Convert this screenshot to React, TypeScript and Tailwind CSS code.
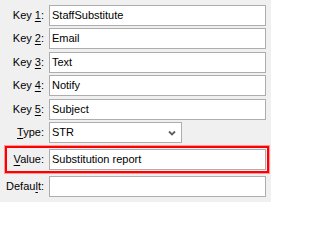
import React from "react";

const font = { fontFamily: '"Liberation Sans", Arial, sans-serif' };

function Label({ text, hot, w = "w-[40px]" }: { text: string; hot: number; w?: string }) {
  return (
    <span className={`${w} shrink-0 text-right pr-[1px] text-[11px] text-[#000]`}>
      {text.slice(0, hot)}
      <span className="underline underline-offset-[2px]">{text[hot]}</span>
      {text.slice(hot + 1)}:
    </span>
  );
}

function Field({ value }: { value: string }) {
  return (
    <div className="flex-1 h-[21px] border border-[#adadad] bg-white flex items-center pl-[2px] text-[11px] text-[#000]">
      {value}
    </div>
  );
}

function Row({ label, hot, value, mt }: { label: string; hot: number; value: string; mt: string }) {
  return (
    <div className={`flex items-center gap-[4px] pl-[5px] pr-[5px] ${mt}`}>
      <Label text={label} hot={hot} />
      <Field value={value} />
    </div>
  );
}

export default function App() {
  return (
    <div className="w-[271px] h-[202px] bg-[#f0f0f0] overflow-hidden pt-[5px]" style={font}>
      <Row label="Key 1" hot={4} value="StaffSubstitute" mt="" />
      <Row label="Key 2" hot={4} value="Email" mt="mt-[2px]" />
      <Row label="Key 3" hot={4} value="Text" mt="mt-[3px]" />
      <Row label="Key 4" hot={4} value="Notify" mt="mt-[2px]" />
      <Row label="Key 5" hot={4} value="Subject" mt="mt-[3px]" />

      <div className="flex items-center gap-[4px] pl-[5px] mt-[2px]">
        <Label text="Type" hot={0} />
        <div className="w-[133px] h-[21px] border border-[#adadad] bg-white flex items-center justify-between pl-[2px] pr-[5px] text-[11px] text-[#000]">
          <span>STR</span>
          <svg width="8" height="6" viewBox="0 0 8 6">
            <path d="M1 1.5 L4 4.5 L7 1.5" fill="none" stroke="#5f5f5f" strokeWidth="1.8" />
          </svg>
        </div>
      </div>

      <div className="ml-[5px] mr-[2px] mt-[3px] border-2 border-[#ff0000] outline outline-1 outline-[#ff9999] py-[1px] pr-[1px] flex items-center gap-[4px]">
        <Label text="Value" hot={0} w="w-[38px]" />
        <Field value="Substitution report" />
      </div>

      <Row label="Default" hot={5} value="" mt="mt-[3px]" />
    </div>
  );
}
